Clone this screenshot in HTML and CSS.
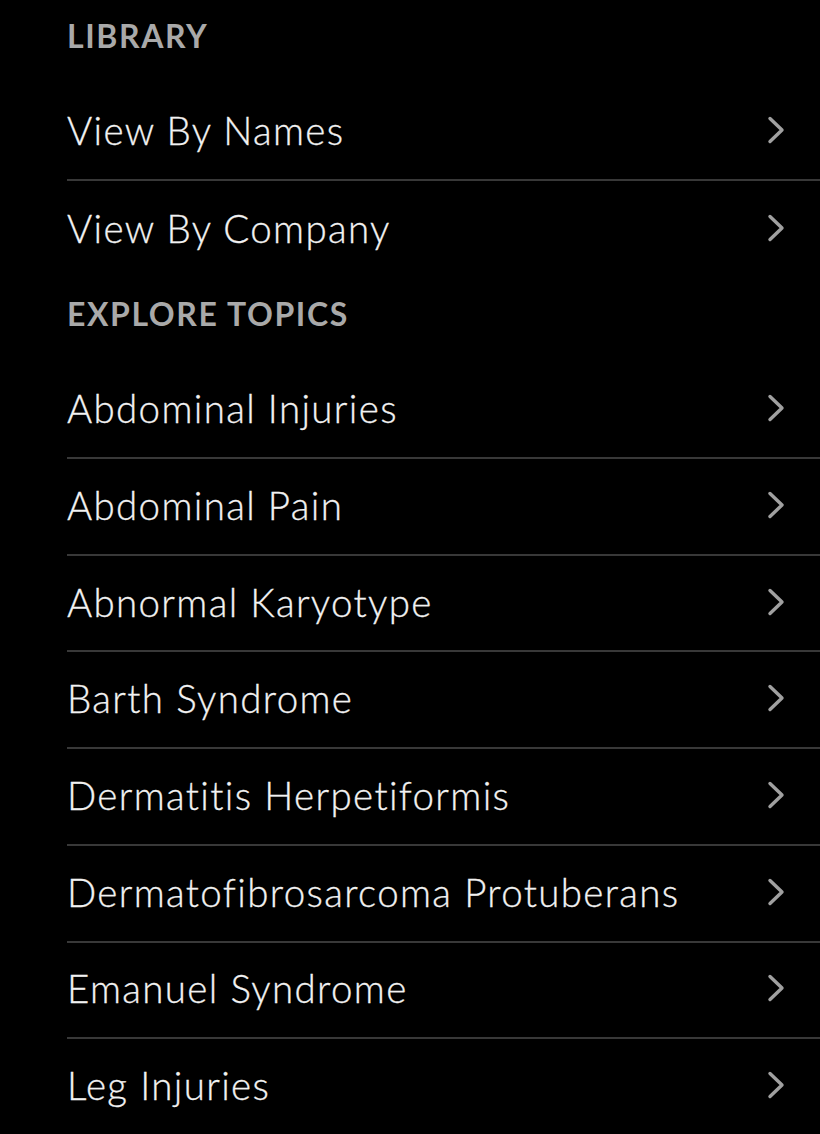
FILE: index.html
```html
<!DOCTYPE html>
<html lang="en">
<head>
<meta charset="utf-8">
<title>Library</title>
<link rel="stylesheet" href="styles.css">
</head>
<body>
<main class="list">
  <section class="group">
    <h2 class="group-title first">LIBRARY</h2>
    <a class="row" href="#"><span class="label">View By Names</span><svg class="chev" viewBox="0 0 18 28"><path d="M3 2.5 L15 14 L3 25.5"/></svg></a>
    <a class="row last" href="#"><span class="label">View By Company</span><svg class="chev" viewBox="0 0 18 28"><path d="M3 2.5 L15 14 L3 25.5"/></svg></a>
  </section>
  <section class="group">
    <h2 class="group-title">EXPLORE TOPICS</h2>
    <a class="row" href="#"><span class="label">Abdominal Injuries</span><svg class="chev" viewBox="0 0 18 28"><path d="M3 2.5 L15 14 L3 25.5"/></svg></a>
    <a class="row" href="#"><span class="label">Abdominal Pain</span><svg class="chev" viewBox="0 0 18 28"><path d="M3 2.5 L15 14 L3 25.5"/></svg></a>
    <a class="row" href="#"><span class="label">Abnormal Karyotype</span><svg class="chev" viewBox="0 0 18 28"><path d="M3 2.5 L15 14 L3 25.5"/></svg></a>
    <a class="row" href="#"><span class="label">Barth Syndrome</span><svg class="chev" viewBox="0 0 18 28"><path d="M3 2.5 L15 14 L3 25.5"/></svg></a>
    <a class="row" href="#"><span class="label">Dermatitis Herpetiformis</span><svg class="chev" viewBox="0 0 18 28"><path d="M3 2.5 L15 14 L3 25.5"/></svg></a>
    <a class="row" href="#"><span class="label">Dermatofibrosarcoma Protuberans</span><svg class="chev" viewBox="0 0 18 28"><path d="M3 2.5 L15 14 L3 25.5"/></svg></a>
    <a class="row" href="#"><span class="label">Emanuel Syndrome</span><svg class="chev" viewBox="0 0 18 28"><path d="M3 2.5 L15 14 L3 25.5"/></svg></a>
    <a class="row" href="#"><span class="label">Leg Injuries</span><svg class="chev" viewBox="0 0 18 28"><path d="M3 2.5 L15 14 L3 25.5"/></svg></a>
  </section>
</main>
</body>
</html>
```
FILE: styles.css
```css
html, body {
  margin: 0;
  padding: 0;
  background: #000;
}
body {
  font-family: "Lato", "Noto Sans", sans-serif;
  color: #f2f2f2;
  overflow: hidden;
}
.list {
  display: flex;
  flex-direction: column;
  margin-top: -1px;
}
.group {
  display: flex;
  flex-direction: column;
}
.group-title {
  margin: 0;
  height: 85px;
  box-sizing: border-box;
  padding: 16px 0 0 67px;
  font-size: 32px;
  line-height: 42px;
  font-weight: 700;
  color: #a9a9a9;
  letter-spacing: 1.6px;
}
.row {
  display: flex;
  align-items: center;
  justify-content: space-between;
  height: 96.7px;
  box-sizing: border-box;
  margin-left: 67px;
  padding-right: 35px;
  padding-bottom: 3px;
  border-bottom: 2px solid #383838;
  text-decoration: none;
  color: #f2f2f2;
}
.row.last {
  border-bottom: none;
}
.label {
  font-size: 38.5px;
  font-weight: 300;
  letter-spacing: 1.35px;
  -webkit-text-stroke: 0.3px #f2f2f2;
}
.chev {
  width: 18px;
  height: 28px;
  fill: none;
  stroke: #a0a0a0;
  stroke-width: 3.4;
  stroke-linecap: round;
  stroke-linejoin: round;
}
```
